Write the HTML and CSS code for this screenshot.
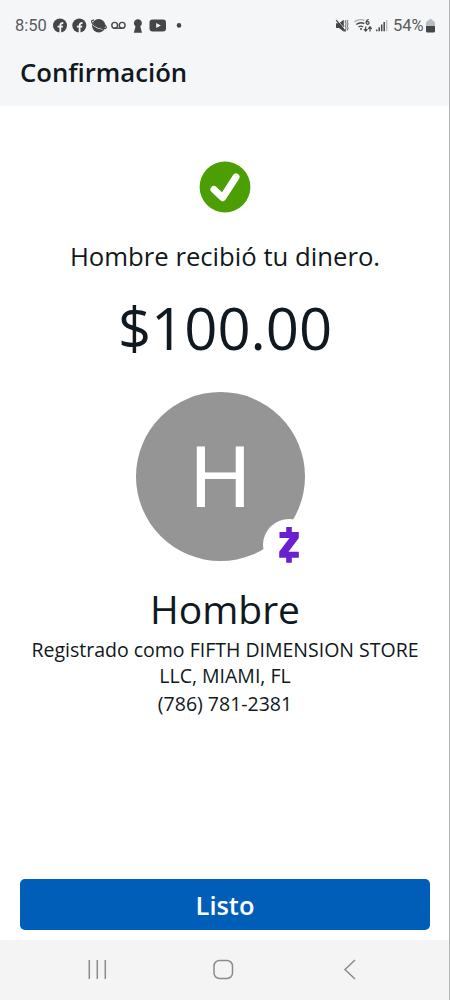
FILE: index.html
```html
<!DOCTYPE html>
<html lang="es">
<head>
<meta charset="utf-8">
<title>Confirmación</title>
<link rel="stylesheet" href="styles.css">
</head>
<body>
<div class="screen">
  <header class="top">
    <div class="status">
      <span class="clock">8:50</span>
      <svg class="notifications" width="132" height="20" viewBox="52 16 132 20">
        <g fill="#454648">
          <circle cx="60" cy="25.5" r="7"/><circle cx="79.3" cy="25.5" r="7"/>
          <circle cx="98.700" cy="25.700" r="6.7"/>
          <path d="M135.500 26.400a4 4 0 1 1 4.800 0l1.700 6.400h-8.200z"/>
          <rect x="149.5" y="19.6" width="16.5" height="12" rx="3"/>
          <circle cx="179" cy="25.4" r="2.3"/>
        </g>
        <g fill="none" stroke="#f5f6f8" stroke-width="1.8">
          <path d="M60.3 33v-7.500c0-2 .8-2.700 3-2.700M57.600 26.700h5.300M79.600 33v-7.500c0-2 .8-2.700 3-2.700M76.900 26.700h5.300"/>
        </g>
        <path d="M91.800 22c1.500 4.800 8.500 8.200 14 6" fill="none" stroke="#f5f6f8" stroke-width="1.300"/>
        <path d="M94 20.200c-3.500-.3-3.200 2.800 1 5.500s11.600 4.300 11.300 1.500c-.1-1-1-1.900-2-2.600" fill="none" stroke="#454648" stroke-width="1.200"/>
        <g fill="none" stroke="#454648" stroke-width="1.400"><circle cx="114.700" cy="25.300" r="2.900"/><circle cx="122.200" cy="25.300" r="2.900"/><path d="M114.700 28.200h7.500"/></g>
        <path d="m156.200 23 4.600 2.500-4.600 2.500z" fill="#f5f6f8"/>
      </svg>
      <svg class="signals" width="54" height="20" viewBox="334 16 54 20">
        <path d="M336 23.200h3l4.800-3.400v12l-4.800-3.700h-3z" fill="#454648"/>
        <path d="m337 19.500 9 11" stroke="#f5f6f8" stroke-width=".8"/>
        <path d="m336.200 20.200 9.300 11.300" stroke="#454648" stroke-width="1.300"/>
        <path d="M346 20l-1 2 1.200 2-1.200 2 1.200 2-1 2.500M348 20l-1 2 1.200 2-1.200 2 1.200 2-1 2.500" fill="none" stroke="#454648" stroke-width=".8"/>
        <g fill="none" stroke-width="1.400"><path d="M354.500 21.900q5-3.600 10-1.500" stroke="#aaabad"/><path d="M356.300 24.500q4-3.200 8-.8M358.500 27q2.500-1.800 4.500 0" stroke="#454648"/></g>
        <circle cx="361" cy="29" r="1" fill="#454648"/>
        <g fill="none" stroke="#454648" stroke-width="1.200"><path d="M368.700 19.700c-3-.3-3.200 4.600-1.300 4.600 2.200 0 2.100-2.700.2-2.700-1 0-1.700.7-1.700 1.400M365.700 26.500v4.500m-1.800-1.800 1.800 2 1.800-2M370 31.500v-4.500m-1.700 1.800 1.700-2 1.700 2"/></g>
        <path d="M376.700 31.200v-1.800M379.200 31.200v-4M381.700 31.200v-6.700M384.200 31.200v-9.200" stroke="#454648" stroke-width="1.500"/>
        <path d="M386.700 31.200V20" stroke="#b5b6b8" stroke-width="1.300"/>
      </svg>
      <span class="percent">54%</span>
      <svg class="battery" width="9" height="14" viewBox="0 0 9 14"><path d="M0 13V4q0-2 2-2.300Q2.500 0 4.500 0T7 1.700q2 .3 2 2.300v9z" fill="#bbbcbe"/><path d="M0 7h9v5q0 1.500-1.500 1.500h-6Q0 13.500 0 12z" fill="#454648"/></svg>
    </div>
    <h1 class="title">Confirmación</h1>
  </header>
  <main class="content">
    <svg class="success" width="52" height="52" viewBox="0 0 52 52"><circle cx="26" cy="26" r="25.400" fill="#4b9f05"/><path d="m15 28.500 8.700 8.200L37 16" fill="none" stroke="#fff" stroke-width="7" stroke-linecap="round" stroke-linejoin="round"/></svg>
    <p class="message">Hombre recibió tu dinero.</p>
    <p class="amount">$100.00</p>
    <div class="avatar">
      <span class="initial">H</span>
      <svg class="badge" width="52" height="52" viewBox="0 0 52 52"><circle cx="26" cy="26" r="26" fill="#fff"/><path d="M16.500 12.900h6.700V8h5.600v4.900h7v6L25.500 32.700h10.300v6h-7v5h-5.600v-5h-7v-6L26.500 18.900h-10z" fill="#6a1fd0"/></svg>
    </div>
    <h2 class="name">Hombre</h2>
    <p class="detail">Registrado como FIFTH DIMENSION STORE<br>LLC, MIAMI, FL</p>
    <p class="detail phone">(786) 781-2381</p>
    <button class="done">Listo</button>
  </main>
  <nav class="nav">
    <svg width="450" height="60" viewBox="0 0 450 60" fill="none" stroke="#8b8b8b" stroke-width="1.500"><path d="M89.300 20v19M97.300 20v19M105.300 20v19"/><rect x="214" y="20.500" width="18.500" height="18" rx="5.500"/><path d="m355 20-10 9.500 10 9.500"/></svg>
  </nav>
</div>
</body>
</html>
```
FILE: styles.css
```css
* { box-sizing: border-box; margin: 0; padding: 0; }
body { background: #fff; color: #101820; font-family: "Open Sans", "Noto Sans", sans-serif; }
.screen { display: flex; flex-direction: column; width: 450px; height: 1000px; border-right: 1px solid #b4b5b7; overflow: hidden; }
.top { height: 106px; flex: none; background: #f5f6f8; }
.status { display: flex; align-items: center; height: 54px; padding: 0 14px 2px 15px; font: 16.500px/20px Roboto, sans-serif; color: #5a5b5d; }
.clock { width: 37px; white-space: nowrap; }
.signals { margin-left: auto; }
.percent { width: 33px; margin-left: 5px; white-space: nowrap; }
.battery { flex: none; }
.title { padding-left: 20px; font-size: 25.700px; line-height: 38px; font-weight: 600; }
.content { flex: 1; display: flex; flex-direction: column; align-items: center; padding: 55px 19px 10px 20px; text-align: center; white-space: nowrap; }
.content > * { flex: none; }
.message { margin-top: 26px; font-size: 25.700px; line-height: 36px; }
.amount { margin-top: 18px; font-size: 58px; line-height: 70px; }
.avatar { position: relative; display: flex; align-items: center; justify-content: center; width: 169px; height: 169px; margin: 29px 9px 0 0; border-radius: 50%; background: #959595; }
.initial { margin-top: 2px; color: #fff; font: 86px/100px Roboto, sans-serif; }
.badge { position: absolute; left: 127px; top: 127px; }
.name { margin-top: 23px; font-size: 39px; line-height: 50px; font-weight: 400; }
.detail { margin-top: 3px; font-size: 19.500px; line-height: 26px; }
.phone { margin-top: 2px; }
.done { width: 410px; height: 51px; margin-top: auto; border: 0; border-radius: 5px; background: #005eb8; color: #fff; font: 600 25.400px/34px "Open Sans", sans-serif; }
.nav { height: 60px; flex: none; background: #f4f4f4; }
.nav svg { display: block; }
```
